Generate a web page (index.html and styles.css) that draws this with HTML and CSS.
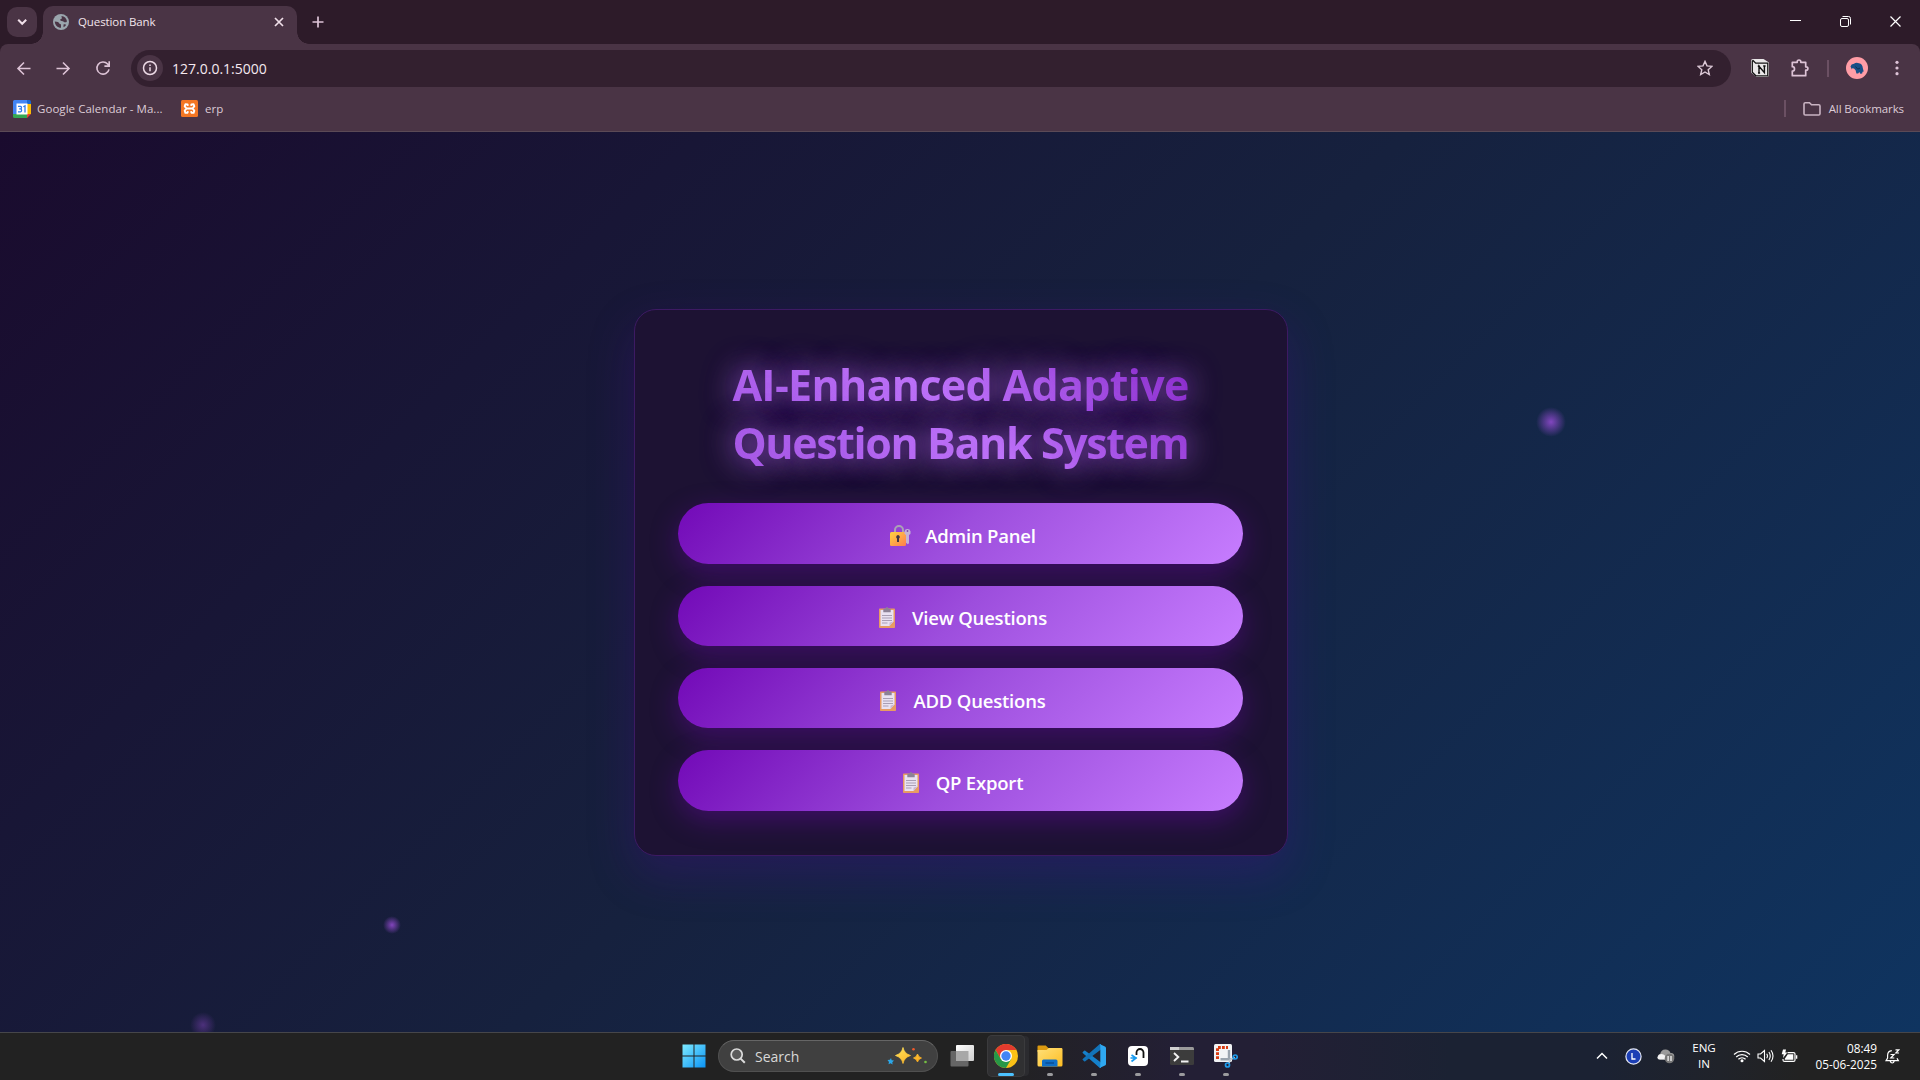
FILE: index.html
```html
<!DOCTYPE html>
<html lang="en">
<head>
<meta charset="utf-8">
<title>Question Bank</title>
<link rel="stylesheet" href="styles.css">
</head>
<body>
<svg class="defs" width="0" height="0" aria-hidden="true">
  <defs>
    <linearGradient id="lock" x1="0" y1="0" x2="1" y2="1"><stop offset="0" stop-color="#ffd33f"/><stop offset="1" stop-color="#ff7d50"/></linearGradient>
    <linearGradient id="win" x1="0" y1="0" x2="1" y2="1"><stop offset="0" stop-color="#7deaff"/><stop offset="1" stop-color="#0a93f5"/></linearGradient>
    <linearGradient id="gold" x1="0" y1="0" x2="1" y2="1"><stop offset="0" stop-color="#ffe45c"/><stop offset="1" stop-color="#fba416"/></linearGradient>
    <linearGradient id="folder" x1="0" y1="0" x2="1" y2="1"><stop offset="0" stop-color="#ffe07a"/><stop offset="1" stop-color="#fdbd22"/></linearGradient>
    <linearGradient id="pane" x1="0" y1="0" x2="1" y2="1"><stop offset="0" stop-color="#fff"/><stop offset="1" stop-color="#cfcfcf"/></linearGradient>
    <symbol id="clipboard" viewBox="0 0 16 21">
      <rect x="0" y="1.500" width="16" height="19.500" rx=".8" fill="#e79c63"/>
      <path d="M1.500 3h13v11.500L10.500 19H1.500z" fill="#e9e2f2"/>
      <path d="M10.500 19v-3.500l4-1z" fill="#c9b8d4"/>
      <path d="M4.300 5.200V2.600q0-.8.8-.8h1.500q.2-1.800 1.400-1.800t1.400 1.800h1.500q.8 0 .8.800v2.600z" fill="#8c8296"/>
      <path d="M3 8.500h10M3 11h10M3 13.500h10M3 16h5.500" stroke="#a99fb5" stroke-width="1"/>
    </symbol>
  </defs>
</svg>

<header class="chrome">
  <div class="tabstrip">
    <button class="tab-search"><svg width="30" height="30" viewBox="0 0 30 30"><path d="M11.200 12.800l4 4 4-4" fill="none" stroke="#f0dfe9" stroke-width="2"/></svg></button>
    <div class="tab">
      <svg class="favicon" width="16" height="16" viewBox="0 0 16 16"><circle cx="8" cy="8" r="8" fill="#9aa5ad"/><path d="M1.800 7.500c3 .1 3.800.7 4.300 1.800.4 1 2 .5 1.900 1.800v2.700c-3.400-.1-6.200-2.700-6.200-6.300zM8.600 2c2.700.2 4.900 2.200 5.400 5.200-.8 1.400-2.500 1.500-3.300.5-.8-.9-3.200-.4-3.500-1.700-.2-1.100 1.700-.7 1.700-1.900 0-.7-.6-1.100-.3-2.100zM10.500 10.600c1-.6 2-.4 2.700.2-.7 1.200-1.500 1.900-2.700 2.500z" fill="#4a3445"/></svg>
      <span class="tab-title">Question Bank</span>
      <svg class="tab-close" width="16" height="16" viewBox="0 0 16 16"><path d="M4 4l8 8M12 4l-8 8" stroke="#f0dfe9" stroke-width="1.700"/></svg>
    </div>
    <svg class="new-tab" width="16" height="16" viewBox="0 0 16 16"><path d="M8 2.500v11M2.500 8h11" stroke="#ddc3d6" stroke-width="1.700"/></svg>
    <div class="window-buttons">
      <svg width="50" height="40" viewBox="0 0 50 40"><path d="M20 20.500h11" stroke="#fff"/></svg>
      <svg width="50" height="40" viewBox="0 0 50 40"><rect x="20.500" y="18.500" width="8" height="8" rx="1.500" fill="none" stroke="#fff"/><path d="M22.500 16.500h6q2 0 2 2v6" fill="none" stroke="#fff"/></svg>
      <svg width="50" height="40" viewBox="0 0 50 40"><path d="M20.500 16.500l10 10M30.500 16.500l-10 10" stroke="#fff" stroke-width="1.200"/></svg>
    </div>
  </div>
  <div class="toolbar">
    <div class="nav">
      <svg width="16" height="16" viewBox="0 0 16 16"><path d="M14.500 8.500H2M8 2.500L2 8.500l6 6" fill="none" stroke="#ddc3d6" stroke-width="1.600"/></svg>
      <svg width="16" height="16" viewBox="0 0 16 16"><path d="M1.500 8.500H14M8 2.500l6 6-6 6" fill="none" stroke="#ddc3d6" stroke-width="1.600"/></svg>
      <svg class="reload" width="16" height="16" viewBox="0 0 16 16"><path d="M14 9.300A6.100 6.100 0 1 1 12.600 4l1.400 1.600M14.200 1.200v4.900H9.400" fill="none" stroke="#ddc3d6" stroke-width="1.600"/></svg>
    </div>
    <div class="omnibox">
      <span class="site-info"><svg width="16" height="16" viewBox="0 0 16 16"><circle cx="8" cy="8" r="6.500" fill="none" stroke="#ecd9e5" stroke-width="1.500"/><path d="M8 7.200v4M8 4.400v1.700" stroke="#ecd9e5" stroke-width="1.500"/></svg></span>
      <span class="url">127.0.0.1:5000</span>
      <svg class="star" width="16" height="16" viewBox="0 0 16 16"><path d="M8 1.400l2 4.500 4.900.5-3.700 3.300 1.100 4.800L8 12l-4.300 2.500 1.100-4.800L1.100 6.400 6 5.900z" fill="none" stroke="#ddc9d7" stroke-width="1.400"/></svg>
    </div>
    <div class="extensions">
      <svg class="ext-notion" width="18" height="18" viewBox="0 0 18 18"><path d="M2 0h10.500L18 3.500V16q0 2-2 2H5.500L0 13.500V2q0-2 2-2z" fill="#e9e7e8"/><path d="M2 1.500l2.700 2.700h12.100v12.600H4.800L1.300 13.200V2z" fill="none" stroke="#141414" stroke-width="1.300"/><path d="M8 14V7.200l5.400 6.400V7M6.800 7.200h2.200M12.200 7h2.400M7 14h2.100" fill="none" stroke="#111" stroke-width="1.400"/></svg>
      <svg class="ext-puzzle" width="20" height="20" viewBox="0 0 20 20"><path d="M2.300 4.300h4.900V3.800a1.800 1.800 0 0 1 3.600 0v.5h4.900v4.500h.5a1.700 1.700 0 0 1 0 3.400h-.5v5.500H2.300v-4.600a2.200 2.200 0 0 0 0-4.400z" fill="none" stroke="#ddc3d6" stroke-width="1.700" stroke-linejoin="round"/></svg>
      <span class="divider"></span>
      <svg class="avatar" width="22" height="22" viewBox="0 0 22 22"><circle cx="11" cy="11" r="11" fill="#ff9da6"/><path d="M4.500 9.500Q5 7 8 6.800 10 5 13 6.200 16.500 7 16.800 11l.9 3.500-1.200.2-.3 1.800-1.900.2-1-1.700-1.100 1.500h-1.800l-.8-3.200L8 11.500l-1.800-.2-.3 1.200z" fill="#174f86"/><path d="M9.500 9.500l2.200 2.600 2.300-1" fill="none" stroke="#0d3154"/></svg>
      <svg class="menu" width="4" height="16" viewBox="0 0 4 16"><g fill="#ddc3d6"><circle cx="2" cy="2.300" r="1.600"/><circle cx="2" cy="8" r="1.600"/><circle cx="2" cy="13.700" r="1.600"/></g></svg>
    </div>
  </div>
  <div class="bookmarks">
    <svg width="18" height="18" viewBox="0 0 18 18"><path d="M0 1.500Q0 0 1.500 0H14v4H4v10H0z" fill="#4285f4"/><path d="M14 0h2.500Q18 0 18 1.500V4h-4z" fill="#1967d2"/><path d="M14 4h4v10h-4z" fill="#fbbc04"/><path d="M4 14h10v4H1.500Q0 18 0 16.500V14z" fill="#34a853"/><path d="M14 14h4l-4 4z" fill="#ea4335"/><path d="M3.500 3.500h11v11h-11z" fill="#fff"/><path d="M5 6.300h2.600q.9 0 .9 1.200t-1 1.300H6.200h1.300q1.100.1 1.100 1.500T7.500 11.900H5M10.300 6.800l1.700-.9v6.600" fill="none" stroke="#2f7bea" stroke-width="1.300"/></svg>
    <span class="bm-calendar">Google Calendar - Ma...</span>
    <svg class="bm-xampp" width="17" height="17" viewBox="0 0 17 17"><rect width="17" height="17" rx="1.500" fill="#f37623"/><path d="M6.800 5.800L6.600 4.400 4.400 4.200 3.700 6.300 5.600 8.500 3.700 10.700l.7 2.200 2.200-.2.2-1.500M10.200 5.800l.2-1.400 2.200-.2.700 2.100L11.400 8.500l1.900 2.200-.7 2.200-2.200-.2-.2-1.500M6 8.500h5" fill="none" stroke="#fff" stroke-width="1.900" stroke-linejoin="round"/></svg>
    <span class="bm-erp">erp</span>
    <span class="divider bm-divider"></span>
    <svg class="bm-folder" width="18" height="16" viewBox="0 0 18 16"><path d="M1 3q0-1.300 1.300-1.300h4.200l2 2.100h7.200Q17 3.800 17 5.100v7.600q0 1.300-1.300 1.300H2.300Q1 14 1 12.700z" fill="none" stroke="#c9b3c2" stroke-width="1.600"/></svg>
    <span class="bm-all">All Bookmarks</span>
  </div>
</header>

<main class="page">
  <i class="particle p1"></i><i class="particle p2"></i><i class="particle p3"></i>
  <section class="card">
    <h1>AI-Enhanced Adaptive<br><span class="tight">Question Bank System</span></h1>
    <nav class="links">
      <a class="btn"><svg class="lock" width="22" height="21" viewBox="0 0 22 21"><path d="M5 8V5a4 4 0 0 1 8 0v3" fill="none" stroke="#aaa2b5" stroke-width="2"/><rect x="0" y="7" width="16" height="14" rx="1.500" fill="url(#lock)"/><path d="M8 10a2 2 0 0 1 1 3.600V17H7v-3.400A2 2 0 0 1 8 10z" fill="#3f3545"/><path d="M17.500 4a3.200 3.200 0 0 1 1.500 6v8.300l-1.200 1-1.800-1.500V10a3.200 3.200 0 0 1 1.500-6z" fill="#c3b2d6"/><circle cx="17.500" cy="6" r=".9" fill="#7d49a8"/></svg><span>Admin Panel</span></a>
      <a class="btn"><svg width="16" height="21"><use href="#clipboard"/></svg><span>View Questions</span></a>
      <a class="btn"><svg width="16" height="21"><use href="#clipboard"/></svg><span>ADD Questions</span></a>
      <a class="btn"><svg width="16" height="21"><use href="#clipboard"/></svg><span>QP Export</span></a>
    </nav>
  </section>
</main>

<footer class="taskbar">
  <div class="slot"><svg width="24" height="24" viewBox="0 0 24 24"><path d="M.5.500h11v11H.5zM12.500.500h11v11h-11zM.5 12.500h11v11H.5zM12.500 12.500h11v11h-11z" fill="url(#win)"/></svg></div>
  <div class="search">
    <svg width="16" height="16" viewBox="0 0 16 16"><circle cx="6.700" cy="6.500" r="5.500" fill="#5b5b5b" stroke="#dcdcdc" stroke-width="1.700"/><path d="M10.600 10.600l4.200 4.200" stroke="#dcdcdc" stroke-width="2"/></svg>
    <span>Search</span>
    <svg class="sparkles" width="42" height="20" viewBox="0 0 42 20"><path d="M17 1.500q1.200 6 7.500 8-6.300 2-7.500 8-1.200-6-7.500-8 6.300-2 7.500-8zM31.500 8q.7 3 4 4-3.300 1-4 4-.7-3-4-4 3.300-1 4-4z" fill="url(#gold)" stroke="url(#gold)" stroke-width=".8"/><path d="M5 12l.7 2.200 2.300.4-1.700 1.600.3 2.300-2-1.300-2.100 1 .5-2.300L1.500 14l2.400-.2z" fill="#2ba8ea"/><circle cx="27.500" cy="3.200" r="1.300" fill="#f0592a"/><circle cx="39.500" cy="16" r="1.300" fill="#75c043"/></svg>
  </div>
  <div class="slot"><svg width="24" height="24" viewBox="0 0 24 24"><rect x=".5" y="7" width="18" height="15.500" rx="1" fill="#666"/><rect x="6" y="1" width="18" height="16" rx="1" fill="url(#pane)"/><path d="M6 7h12.500v10H6z" fill="#a8a8a8"/></svg></div>
  <div class="slot active"><svg width="24" height="24" viewBox="0 0 24 24"><circle cx="12" cy="12" r="12" fill="#fbc116"/><path d="M1.600 6A12 12 0 0 1 22.400 6H12L6.800 15z" fill="#e33b2e"/><path d="M1.600 6A12 12 0 0 0 12 24l5.200-9H6.800z" fill="#279847"/><circle cx="12" cy="12" r="6" fill="#fff"/><circle cx="12" cy="12" r="4.700" fill="#4285f4"/></svg></div>
  <div class="slot running"><svg width="26" height="22" viewBox="0 0 26 22"><path d="M.5 1.500Q.5.500 1.500.500h7.300l2.500 2.500H25v4H.5z" fill="#dc9a10"/><path d="M.5 5h9l2.300-2H24q1.500 0 1.500 1.300V20q0 1.500-1.500 1.500H2Q.5 21.500.5 20z" fill="url(#folder)"/><path d="M5 21.500V16q0-1.500 1.500-1.500h12.500q1.500 0 1.500 1.500v5.500z" fill="#0f6fc6"/><path d="M8.500 18h8.500" stroke="#0a4d93" stroke-width="1.500"/></svg></div>
  <div class="slot running"><svg width="24" height="24" viewBox="0 0 24 24"><path d="M.6 8.200l1.500-1.400q.6-.4 1.200 0L19 18.500V24q-1 .2-1.700-.5L.7 8.900q-.3-.4-.1-.7z" fill="#1580cb"/><path d="M.6 15.800l1.500 1.400q.6.400 1.200 0L19 5.500V0q-1-.2-1.700.5L.7 15.100q-.3.400-.1.700z" fill="#1273b9"/><path d="M17.300.5Q18 .2 18.600.400L23 2.500q1 .5 1 1.500v16q0 1-1 1.500l-4.400 2.100q-.7.200-1.300-.2 1 .2 1-1V1.500q0-1.200-1-1z" fill="#2fa8f0"/></svg></div>
  <div class="slot running"><svg width="20" height="20" viewBox="0 0 20 20"><rect width="20" height="20" rx="4" fill="#fff"/><path d="M8.500 9V6.500a3.500 3.500 0 0 1 7 0V12" fill="none" stroke="#111" stroke-width="1.800"/><path d="M3.500 9L8 12l-4.500 3.500M2.500 12H9" fill="none" stroke="#189bf0" stroke-width="1.700"/></svg></div>
  <div class="slot running"><svg width="24" height="18" viewBox="0 0 24 18"><rect width="24" height="18" rx="1.500" fill="#3c3c3c"/><path d="M0 3V1.500Q0 0 1.500 0h21Q24 0 24 1.500V3z" fill="#9a9a9a"/><path d="M0 0h9v3H0z" fill="#d0d0d0"/><path d="M4 6l4.300 4L4 14M11 14.500h7.500" fill="none" stroke="#f2f2f2" stroke-width="1.900"/></svg></div>
  <div class="slot running"><svg width="24" height="24" viewBox="0 0 24 24"><rect width="18" height="18" rx="1.500" fill="#f1f3f5"/><path d="M3.500 15V3.500H14" fill="none" stroke="#d83b12" stroke-width="3" stroke-dasharray="2.800 1.200"/><path d="M15 6v9M6.500 15.300h10.500" stroke="#9aa4ae" stroke-width="2.400"/><path d="M14.500 20l2-4.500 4.500-2" fill="none" stroke="#c0c8cf" stroke-width="1.800"/><circle cx="21.200" cy="13" r="2" fill="none" stroke="#1f9cea" stroke-width="1.700"/><circle cx="13.500" cy="21" r="2" fill="none" stroke="#1f9cea" stroke-width="1.700"/></svg></div>
  <div class="tray">
    <svg class="chev" width="12" height="8" viewBox="0 0 12 8"><path d="M1 6.500l5-5 5 5" fill="none" stroke="#fff" stroke-width="1.500"/></svg>
    <svg class="lapp" width="17" height="17" viewBox="0 0 17 17"><circle cx="8.500" cy="8.500" r="7.600" fill="#1c3fb5" stroke="#e4e8f5" stroke-width="1.200"/><path d="M7 5v6h3.500" fill="none" stroke="#fff" stroke-width="1.300"/></svg>
    <svg class="cloud" width="18" height="16" viewBox="0 0 18 16"><path d="M3 11.500a3 3 0 0 1 .3-5.800A5.300 5.300 0 0 1 13.500 5a3.200 3.200 0 0 1 1 6.500z" fill="#9a9a9a"/><path d="M1 11q-1.500-3 1.500-4.500 3-1.500 6 1.500l1 3.500H2z" fill="#f2f2f2"/><circle cx="12.500" cy="10.500" r="4.800" fill="#777"/><path d="M11.100 8v5M14 8v5" stroke="#fff" stroke-width="1.200"/></svg>
    <div class="lang">ENG<br>IN</div>
    <svg class="wifi" width="18" height="14" viewBox="0 0 18 14"><g fill="none" stroke="#fff" stroke-width="1.200"><path d="M1 5.500a11.500 11.500 0 0 1 16 0M3.200 8a8.300 8.300 0 0 1 11.600 0M5.400 10.300a5.200 5.200 0 0 1 7.200 0"/></g><circle cx="9" cy="11.800" r="1.500" fill="#fff"/></svg>
    <svg class="sound" width="17" height="14" viewBox="0 0 17 14"><g fill="none" stroke="#fff" stroke-width="1.100"><path d="M1 5h2.500L7.500 1.500v11L3.500 9H1zM9.700 4.700q1.500 2.300 0 4.600M11.900 3q2.700 4 0 8M14 1.300q4 5.700 0 11.400"/></g></svg>
    <svg class="battery" width="17" height="14" viewBox="0 0 17 14"><path d="M6.500 3.600h6q1.500 0 1.500 1.500v5.800q0 1.500-1.500 1.500h-9Q2 12.400 2 10.900V10" fill="none" stroke="#fff" stroke-width="1.200"/><path d="M15 6.200h1.300v3.600H15zM6.800 5.300H12.300v5.400H3.800V9.800z" fill="#fff"/><path d="M2 .5h3L4.300 3.400h2L2 9l.7-3.700H.7z" fill="#fff"/></svg>
    <div class="clock">08:49<br>05-06-2025</div>
    <svg class="bell" width="15" height="15" viewBox="0 0 15 15"><g fill="none" stroke="#fff" stroke-width="1.200"><path d="M6.800 1.700Q2.600 2.100 2.600 6.500V9L1 11.700h12.400L12 9.200M5.200 12q.5 2 2 2t2-2M5.500 5.500H9L5.800 9h3.500M10.500.8h3.300l-3 3.200H14"/></g></svg>
  </div>
</footer>
</body>
</html>
```

FILE: styles.css
```css
* { box-sizing: border-box; }
body {
  margin: 0;
  width: 1920px;
  height: 1080px;
  overflow: hidden;
  display: flex;
  flex-direction: column;
  font-family: "Open Sans", "Noto Sans", sans-serif;
  color: #fff;
}
svg { display: block; flex: none; }
.defs { position: absolute; }
span { white-space: nowrap; }

/* browser frame */
.chrome { height: 132px; background: #2d1b29; border-bottom: 1px solid #5b4a56; }
.tabstrip { height: 44px; display: flex; align-items: flex-start; }
.tab-search { width: 30px; height: 30px; margin: 7px 0 0 7px; padding: 0; border: 0; border-radius: 10px; background: #4a3445; }
.tab {
  position: relative;
  width: 254px;
  height: 38px;
  margin: 6px 0 0 6px;
  padding: 0 10px 7px;
  display: flex;
  align-items: center;
  background: #4a3445;
  border-radius: 10px 10px 0 0;
}
.tab::before, .tab::after { content: ""; position: absolute; bottom: 0; width: 12px; height: 12px; }
.tab::before { left: -12px; background: radial-gradient(circle at 0 0, transparent 11.5px, #4a3445 12px); }
.tab::after { right: -12px; background: radial-gradient(circle at 100% 0, transparent 11.5px, #4a3445 12px); }
.tab-title { margin-left: 9px; font-size: 11.5px; letter-spacing: -0.1px; line-height: 16px; color: #f2e4ec; }
.tab-close { margin-left: auto; }
.new-tab { margin: 14px 0 0 13px; }
.window-buttons { display: flex; margin-left: auto; }
.toolbar { height: 49px; padding-bottom: 1px; display: flex; align-items: center; background: #4a3445; border-radius: 8px 8px 0 0; }
.nav { display: flex; gap: 23px; margin-left: 16px; }
.reload { margin-left: 1px; }
.omnibox { width: 1600px; height: 37px; margin-left: 20px; padding: 0 18px 0 6px; display: flex; align-items: center; background: #33202f; border-radius: 19px; }
.site-info { width: 26px; height: 26px; display: grid; place-items: center; border-radius: 50%; background: #4a3445; }
.url { margin-left: 9px; font-size: 14px; color: #f5e8f0; }
.star { margin-left: auto; }
.extensions { display: flex; align-items: center; }
.ext-notion { margin-left: 20px; }
.ext-puzzle { margin-left: 21px; }
.divider { width: 2px; height: 17px; background: #6b5063; }
.extensions .divider { margin-left: 17px; }
.avatar { margin-left: 17px; }
.menu { margin-left: 27px; }
.bookmarks { height: 38px; padding: 0 16px 7px 13px; display: flex; align-items: center; background: #4a3445; font-size: 11.5px; color: #dccbd6; }
.bm-calendar { margin-left: 6px; width: 126px; letter-spacing: 0.05px; }
.bm-xampp { margin-left: 18px; }
.bm-erp { margin-left: 7px; }
.bm-divider { margin-left: auto; }
.bm-folder { margin: 0 8px 0 17px; }
.bm-all { letter-spacing: -0.1px; }

/* web page */
.page {
  position: relative;
  height: 900px;
  overflow: hidden;
  display: grid;
  place-items: center;
  background: linear-gradient(135deg, #1a0b2e 0%, #16213e 50%, #0f3460 100%);
}
.card {
  width: 654px;
  margin: 1px 0 0 2px;
  padding: 44px 44px 44px 43px;
  background: #1d1233;
  border: 1px solid #3d1a63;
  border-radius: 22px;
  box-shadow: 0 18px 46px rgba(72, 12, 150, 0.3);
}
h1 {
  margin: 0 0 31px;
  padding-top: 2px;
  font-size: 43px;
  font-weight: 700;
  line-height: 58px;
  letter-spacing: -0.7px;
  text-align: center;
  white-space: nowrap;
  background: linear-gradient(45deg, #9d4edd, #c77dff, #7209b7);
  -webkit-background-clip: text;
  background-clip: text;
  -webkit-text-fill-color: transparent;
  text-shadow: 0 0 33px rgba(199, 125, 255, 0.5), 0 0 28px rgba(157, 78, 221, 0.6);
}
.tight { letter-spacing: -1.4px; }
.links { display: flex; flex-direction: column; gap: 22px; }
.btn {
  height: 60.4px;
  padding: 4px 0 0 5px;
  display: flex;
  align-items: center;
  justify-content: center;
  gap: 17px;
  border-radius: 55px;
  background: linear-gradient(135deg, #7209b7, #9d4edd 50%, #c77dff);
  box-shadow: 0 9px 28px rgba(114, 9, 183, 0.4);
  font-size: 18.5px;
  font-weight: 600;
  letter-spacing: -0.2px;
}
.lock { margin-right: -4px; }
.particle { position: absolute; border-radius: 50%; background: radial-gradient(circle, #9d4edd, transparent 70%); }
.p1 { left: 1536px; top: 275px; width: 30px; height: 30px; opacity: 0.8; }
.p2 { left: 383px; top: 784px; width: 18px; height: 18px; opacity: 0.8; }
.p3 { left: 190px; top: 880px; width: 26px; height: 26px; opacity: 0.4; }

/* desktop taskbar */
.taskbar {
  height: 48px;
  padding: 0 0 1px 672px;
  display: flex;
  align-items: center;
  border-top: 1px solid #46464a;
  background: linear-gradient(90deg, #222 0 1000px, #231f35 1180px 1260px, #1b2233 1450px 1600px, #20232a 1720px, #222 1800px);
}
.slot { position: relative; width: 44px; height: 40px; display: grid; place-items: center; }
.search {
  width: 220px;
  height: 32px;
  margin: 0 2px;
  padding: 0 9px 0 11px;
  display: flex;
  align-items: center;
  border: 1px solid #505050;
  border-top-color: #666;
  border-radius: 16px;
  background: #404040;
  font-size: 14px;
  color: #d8d8d8;
}
.search span { margin-left: 9px; padding-top: 1px; }
.sparkles { margin-left: auto; }
.active { width: 36px; margin: 0 4px; border-radius: 4px; background: #303032; box-shadow: 0 0 0 1px #3b3b3d, 5px 0 0 #2b2b2f; }
.active::after, .running::after { content: ""; position: absolute; left: 50%; bottom: 0; height: 3px; border-radius: 2px; transform: translateX(-50%); }
.active::after { width: 16px; background: #4cc2ff; }
.running::after { width: 6px; background: #9b9b9e; }
.tray { flex: 1; display: flex; align-items: center; font-size: 11.8px; line-height: 16px; }
.chev { margin-left: 348px; }
.lapp { margin-left: 17px; }
.cloud { margin-left: 15px; }
.lang { width: 40px; margin-left: 9px; text-align: center; font-size: 11.6px; }
.wifi { margin-left: 9px; }
.sound { margin-left: 6px; }
.battery { margin-left: 7px; }
.clock { width: 79px; text-align: right; }
.bell { margin-left: 8px; }
```
